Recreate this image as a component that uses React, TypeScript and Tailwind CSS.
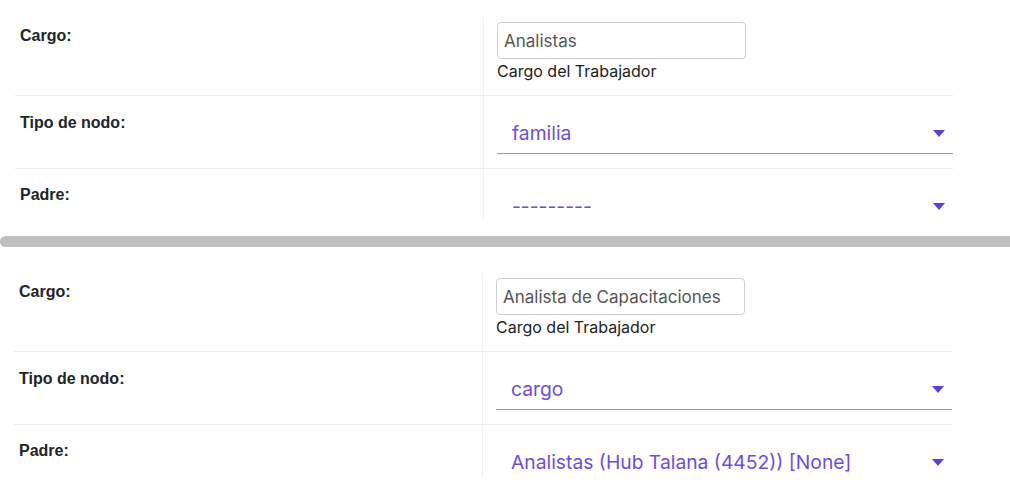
const panels = [
  { cargo: 'Analistas', tipo: 'familia', padre: '---------' },
  { cargo: 'Analista de Capacitaciones', tipo: 'cargo', padre: 'Analistas (Hub Talana (4452)) [None]' },
];

const Caret = () => (
  <svg width="12" height="7" viewBox="0 0 12 7" className="shrink-0">
    <path d="M0 0h12L6 7z" fill="#5b3de6" />
  </svg>
);

const SelectBox = ({ value }: { value: string }) => (
  <div className="w-[456px] pb-[6px] border-b border-[#9e9e9e]">
    <div className="flex items-center justify-between h-[28px] pl-[15px] pr-[8px]">
      <span className="text-[19.3px] leading-[28px] text-[#6b4de6] font-['Inter',sans-serif]">{value}</span>
      <Caret />
    </div>
  </div>
);

const NodeForm = ({ data, className }: { data: (typeof panels)[number]; className: string }) => {
  return (
    <div className={`${className} w-[938px] font-['Liberation_Sans',Arial,sans-serif] text-[#212529]`}>
      <div className="flex h-[79px] border-b border-[#eeeeee]">
        <div className="w-[468px] pl-[5px] pt-[9px] text-[16px] leading-[20px] font-bold">Cargo:</div>
        <div className="flex-1 border-l border-[#f0f0f0] pl-[13px] pt-[5px]">
          <input
            readOnly
            value={data.cargo}
            className="block w-[249px] h-[37px] rounded-[4px] border border-[#cfcfcf] px-[6px] text-[17px] text-[#555] font-['Inter',sans-serif] outline-none"
          />
          <div className="mt-[2px] text-[16px] leading-[20px] text-[#222] font-['Inter',sans-serif]">
            Cargo del Trabajador
          </div>
        </div>
      </div>

      <div className="flex h-[73px] border-b border-[#eeeeee]">
        <div className="w-[468px] pl-[5px] pt-[17px] text-[16px] leading-[20px] font-bold">Tipo de nodo:</div>
        <div className="flex-1 border-l border-[#f0f0f0] pl-[13px] pt-[23px]">
          <SelectBox value={data.tipo} />
        </div>
      </div>

      <div className="flex h-[80px]">
        <div className="w-[468px] pl-[5px] pt-[16px] text-[16px] leading-[20px] font-bold">Padre:</div>
        <div className="flex-1 border-l border-[#f0f0f0] pl-[13px] pt-[23px]">
          <SelectBox value={data.padre} />
        </div>
      </div>
    </div>
  );
};

export default function App() {
  return (
    <div className="w-[1010px] h-[496px] bg-white overflow-hidden">
      <div className="h-[220px] overflow-hidden pt-[17px]">
        <NodeForm data={panels[0]} className="ml-[15px]" />
      </div>
      <div className="h-[16px]" />
      <div className="h-[11px] bg-[#bfbfbf] rounded-l-[6px]" />
      <div className="h-[230px] overflow-hidden pt-[26px]">
        <NodeForm data={panels[1]} className="ml-[14px]" />
      </div>
    </div>
  );
}
